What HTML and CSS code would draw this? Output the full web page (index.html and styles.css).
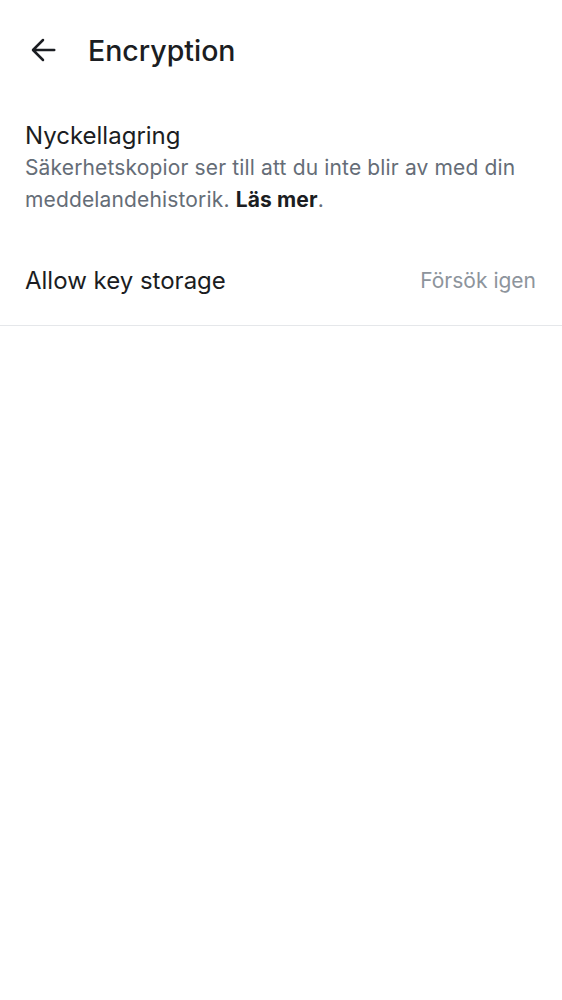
FILE: index.html
```html
<!DOCTYPE html>
<html>
<head>
<meta charset="utf-8">
<link rel="stylesheet" href="styles.css">
</head>
<body>
<header class="topbar">
  <button class="back" aria-label="Back">
    <svg width="30" height="30" viewBox="0 0 24 24"><path d="M21 12H4.5M12 4l-8 8 8 8" fill="none" stroke="#1b1d22" stroke-width="2" stroke-linecap="round" stroke-linejoin="round"/></svg>
  </button>
  <h1 class="title">Encryption</h1>
</header>
<section class="section">
  <h2 class="section-title">Nyckellagring</h2>
  <p class="section-desc">Säkerhetskopior ser till att du inte blir av med din meddelandehistorik. <b>Läs mer</b>.</p>
</section>
<div class="row">
  <span class="row-label">Allow key storage</span>
  <span class="row-action">Försök igen</span>
</div>
</body>
</html>
```
FILE: styles.css
```css
html, body { margin: 0; padding: 0; background: #fff; }
body { font-family: Inter, Roboto, sans-serif; color: #1b1d22; }
.topbar { display: flex; align-items: center; height: 100px; padding-left: 28px; box-sizing: border-box; }
.back { background: none; border: 0; padding: 0; width: 30px; height: 30px; display: flex; margin-right: 30px; }
.title { margin: 0; font-size: 28.5px; font-weight: 500; }
.section { padding: 20px 25px 0; }
.section-title { margin: 0; font-size: 24px; font-weight: 400; line-height: 32px; }
.section-desc { margin: 0; font-size: 21px; line-height: 32px; color: #656d77; letter-spacing: 0.15px; }
.section-desc b { color: #1b1d22; font-weight: 700; }
.row { display: flex; justify-content: space-between; align-items: center; padding: 0 26px 0 25px; height: 89px; margin-top: 20px; border-bottom: 1px solid #e5e7ea; }
.row-label { font-size: 24px; }
.row-action { font-size: 21px; color: #8d949c; }
```
